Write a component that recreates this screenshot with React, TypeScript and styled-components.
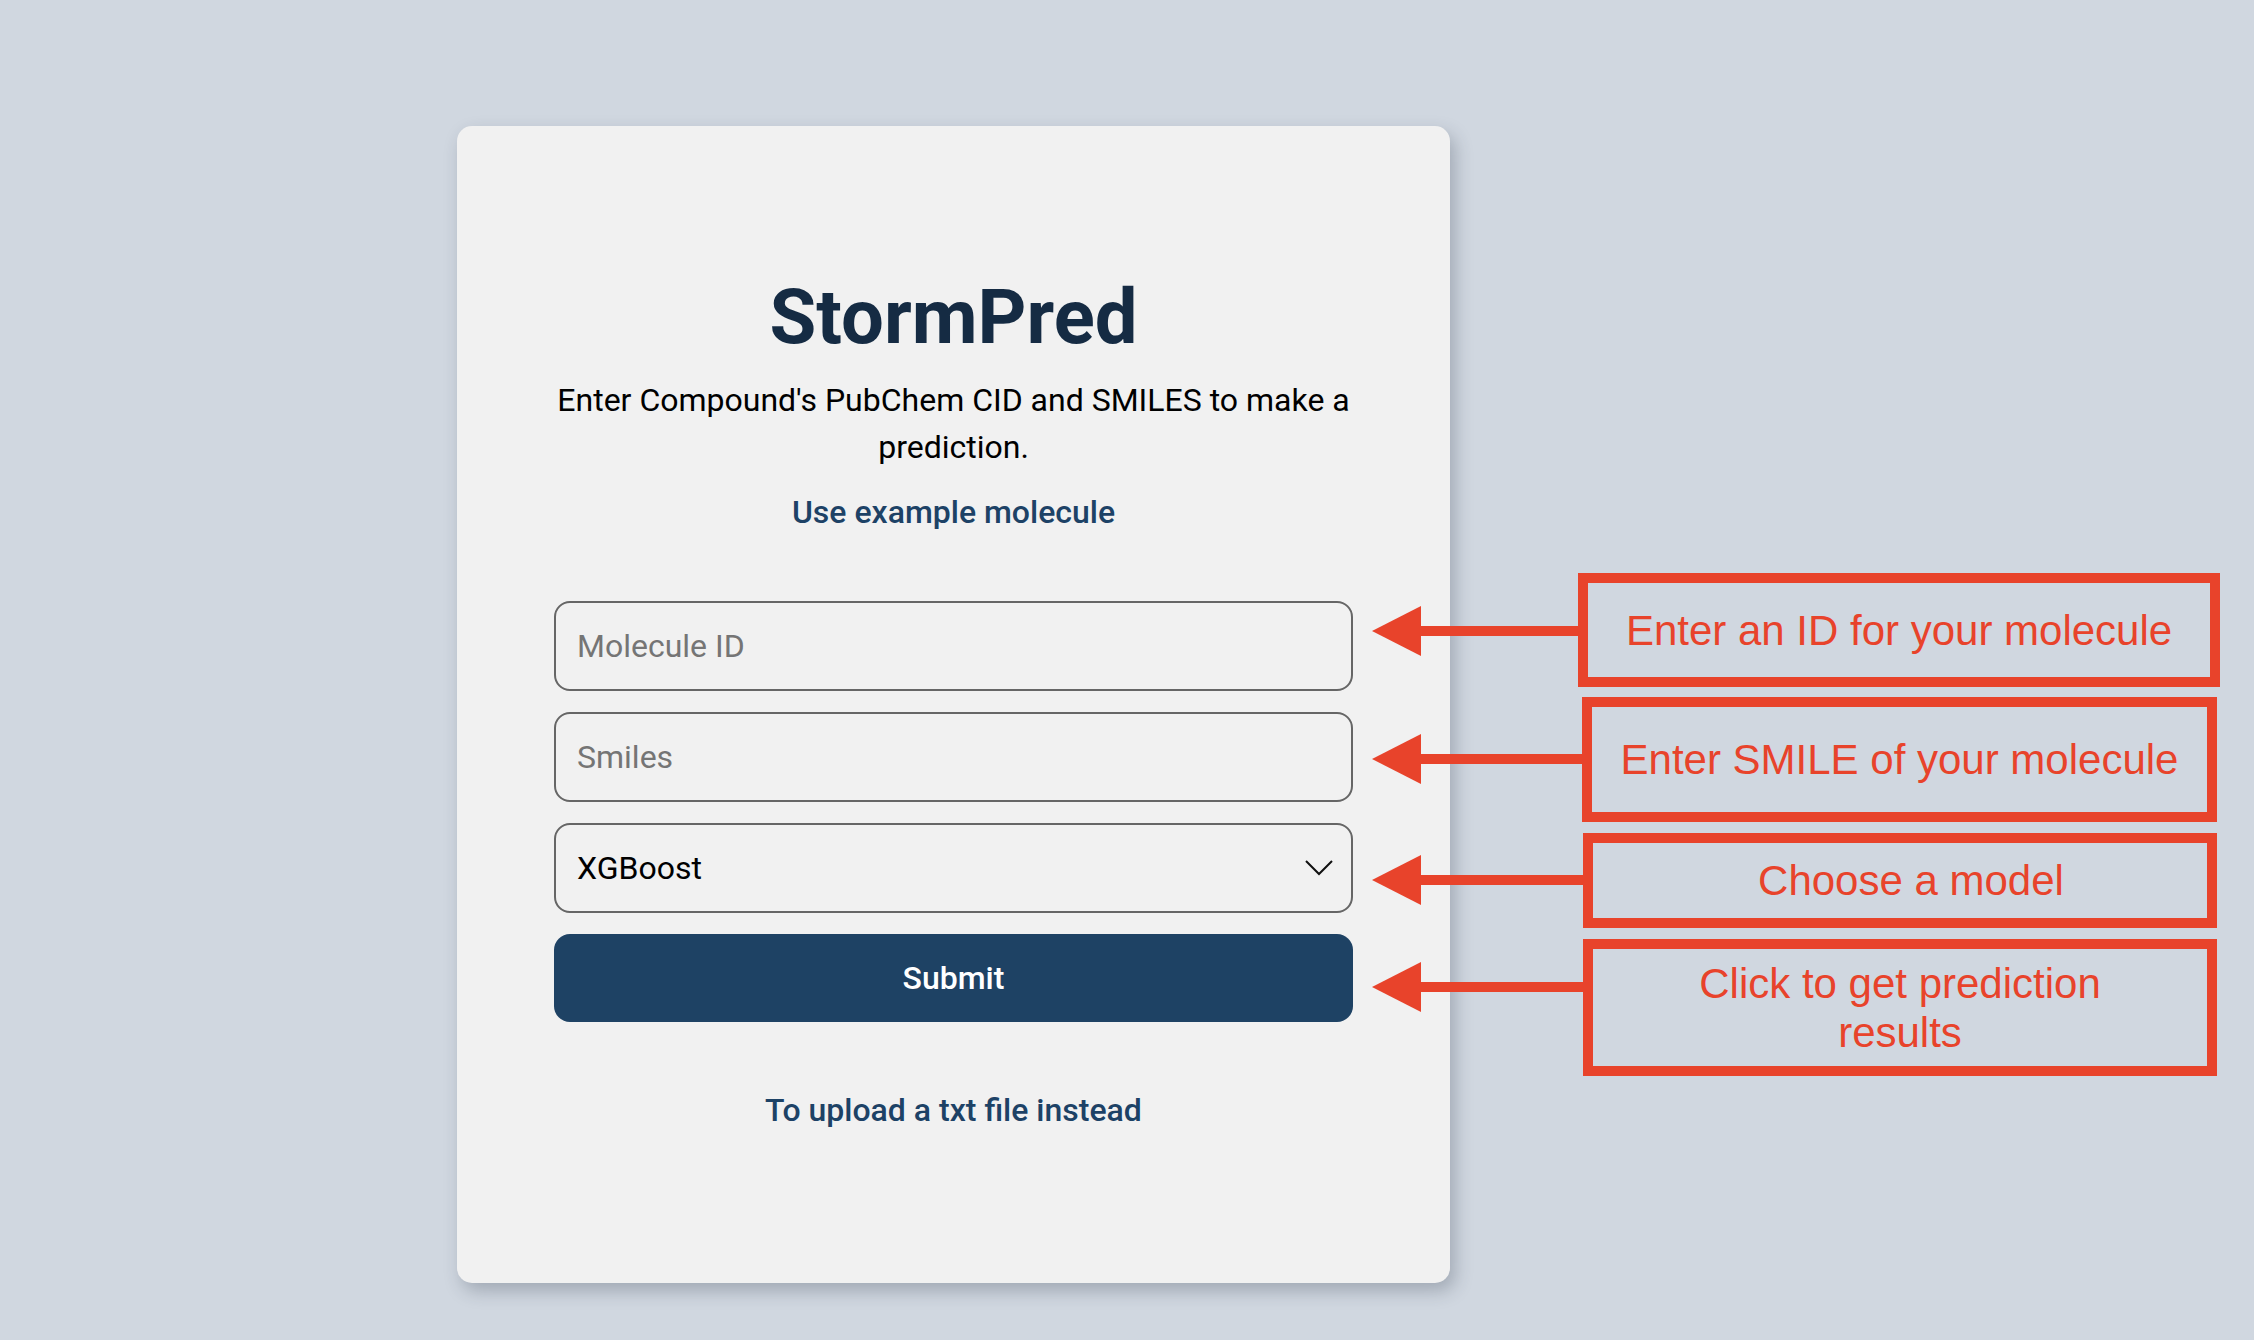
import React from 'react';
import styled, {createGlobalStyle} from "styled-components";

const GlobalStyle = createGlobalStyle`
    html, body {
        margin: 0;
        padding: 0;
        background: #d0d7e0;
    }
    body {
        font-family: Roboto, "Liberation Sans", sans-serif;
    }
`

const Page = styled.div`
    position: relative;
    min-height: 1340px;
    padding: 126px 0 0 457px;
    box-sizing: border-box;
`

const Card = styled.div`
    width: 993px;
    box-sizing: border-box;
    padding: 144px 97px 149px;
    background: #f1f1f1;
    border-radius: 15px;
    box-shadow: 5px 8px 18px rgba(40, 50, 70, 0.28);
    display: flex;
    flex-direction: column;
    align-items: stretch;
    text-align: center;
`

const Title = styled.h1`
    margin: 0;
    font-size: 76px;
    line-height: 94px;
    font-weight: 700;
    color: #152b43;
`

const Subtitle = styled.p`
    margin: 13px 0 0;
    font-size: 32px;
    line-height: 47px;
    color: #000;
`

type LinkProps = {
    $top: number;
}

const TextLink = styled.a<LinkProps>`
    display: block;
    margin-top: ${p => p.$top}px;
    font-size: 32px;
    line-height: 47px;
    font-weight: 500;
    color: #1d4266;
    text-decoration: none;
    cursor: pointer;
`

const Form = styled.form`
    display: flex;
    flex-direction: column;
    gap: 21px;
    margin-top: 65px;
`

const Field = styled.input`
    height: 90px;
    box-sizing: border-box;
    border: 2px solid #666;
    border-radius: 16px;
    background: transparent;
    padding: 0 21px;
    font-family: Roboto, sans-serif;
    font-size: 32px;
    color: #000;
    outline: none;
    &::placeholder {
        color: #757575;
    }
`

const SelectWrap = styled.div`
    position: relative;
`

const Select = styled.select`
    width: 100%;
    height: 90px;
    box-sizing: border-box;
    border: 2px solid #666;
    border-radius: 16px;
    background: transparent;
    padding: 0 21px;
    font-family: Roboto, sans-serif;
    font-size: 32px;
    color: #000;
    appearance: none;
    outline: none;
`

const Chevron = styled.svg`
    position: absolute;
    right: 20px;
    top: 50%;
    transform: translateY(-50%);
    pointer-events: none;
`

const SubmitButton = styled.button`
    height: 88px;
    border: none;
    border-radius: 16px;
    background: #1e4264;
    color: #fff;
    font-family: Roboto, sans-serif;
    font-size: 32px;
    font-weight: 500;
    cursor: pointer;
`

const Callouts = styled.div`
    position: absolute;
    left: 1371px;
    top: 573px;
    display: flex;
    flex-direction: column;
`

type CalloutProps = {
    $gap: number;
}

const Callout = styled.div<CalloutProps>`
    display: flex;
    align-items: flex-start;
    margin-top: ${p => p.$gap}px;
`

type BoxProps = {
    $w: number;
    $h: number;
    $textWidth?: number;
    $shift?: number;
}

const NoteBox = styled.div<BoxProps>`
    width: ${p => p.$w}px;
    height: ${p => p.$h}px;
    box-sizing: border-box;
    border: 10px solid #e8432b;
    padding-left: ${p => p.$shift || 0}px;
    display: flex;
    align-items: center;
    justify-content: center;
    text-align: center;
    font-family: "Liberation Sans", Arial, sans-serif;
    font-size: 42px;
    line-height: 49px;
    color: #e8432b;
    & > span {
        max-width: ${p => p.$textWidth ? `${p.$textWidth}px` : "none"};
    }
`

const RED = "#e8432b";

const Arrow = ({width, offset}: {width: number; offset: number}) => (
    <svg width={width} height={50} style={{marginTop: offset, flexShrink: 0}}>
        <polygon points="1,25 50,0 50,50" fill={RED} />
        <rect x={48} y={20} width={width - 48} height={10} fill={RED} />
    </svg>
)

const notes = [
    {text: "Enter an ID for your molecule", gap: 0, arrow: 207, offset: 33, w: 642, h: 114},
    {text: "Enter SMILE of your molecule", gap: 10, arrow: 211, offset: 37, w: 635, h: 125},
    {text: "Choose a model", gap: 11, arrow: 212, offset: 22, w: 634, h: 95, shift: 22},
    {text: "Click to get prediction results", gap: 11, arrow: 212, offset: 23, w: 634, h: 137, textWidth: 440},
]

export default function App() {
    return (
        <Page>
            <GlobalStyle />
            <Card>
                <Title>StormPred</Title>
                <Subtitle>Enter Compound's PubChem CID and SMILES to make a prediction.</Subtitle>
                <TextLink $top={18}>Use example molecule</TextLink>
                <Form onSubmit={e => e.preventDefault()}>
                    <Field placeholder="Molecule ID" />
                    <Field placeholder="Smiles" />
                    <SelectWrap>
                        <Select defaultValue="xgboost">
                            <option value="xgboost">XGBoost</option>
                            <option value="rf">Random Forest</option>
                        </Select>
                        <Chevron width={28} height={16} viewBox="0 0 28 16">
                            <polyline points="1,1 14,14 27,1" fill="none" stroke="#111" strokeWidth={2} />
                        </Chevron>
                    </SelectWrap>
                    <SubmitButton type="submit">Submit</SubmitButton>
                </Form>
                <TextLink $top={65}>To upload a txt file instead</TextLink>
            </Card>
            <Callouts>
                {notes.map(n => (
                    <Callout key={n.text} $gap={n.gap}>
                        <Arrow width={n.arrow} offset={n.offset} />
                        <NoteBox $w={n.w} $h={n.h} $textWidth={n.textWidth} $shift={n.shift}><span>{n.text}</span></NoteBox>
                    </Callout>
                ))}
            </Callouts>
        </Page>
    );
}
